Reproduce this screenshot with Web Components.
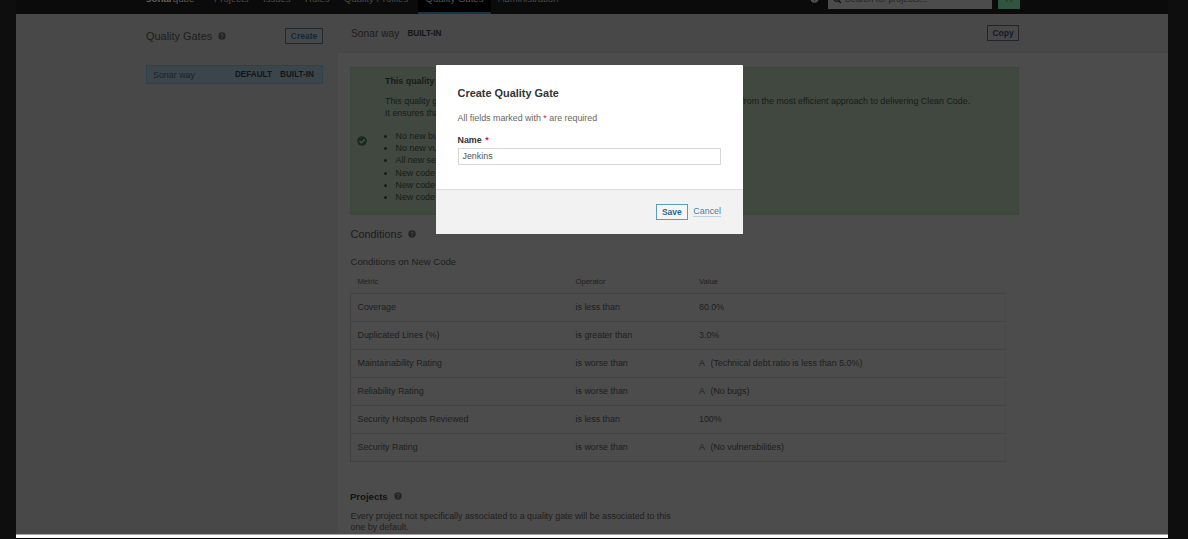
<!DOCTYPE html>
<html lang="en"><head><meta charset="utf-8"><title>Quality Gates</title>
<style>
html,body{margin:0;height:539px;overflow:hidden;background:#0e0e0e}
body{font-family:"Liberation Sans",Arial,sans-serif;font-size:8.88px;color:#1e1e1e}
</style></head><body><gate-app></gate-app>
<script>
const define=(name,html)=>customElements.define(name,class extends HTMLElement{
  constructor(){super();const t=document.createElement('template');
    t.innerHTML='<style>*{box-sizing:border-box}:host{display:block;box-sizing:border-box}</style>'+html;
    this.attachShadow({mode:'open'}).append(t.content.cloneNode(true));}
});
define('help-icon',`<style>:host{width:8px;height:8px;flex:none}svg{display:block}</style>
<svg width="8" height="8" viewBox="0 0 16 16"><circle cx="8" cy="8" r="7.4" fill="#252525"/><path d="M5.7 6.2C5.8 3.5 10.5 3.6 10.4 6.2C10.3 7.8 8 7.8 8 9.5M8 11v2" fill="none" stroke="#484848" stroke-width="1.9"/></svg>`);
define('ui-button',`<style>:host{border:1px solid var(--bd,#222a30);color:var(--fg,#10283b);font-weight:bold;font-size:8.5px;text-align:center;line-height:14px;height:16px;background:var(--bg,transparent)}</style><slot></slot>`);
define('ui-badge',`<style>:host{font-weight:bold;font-size:8.2px;color:#151517;white-space:nowrap}</style><slot></slot>`);
define('nav-bar',`<style>
:host{height:14px;background:#0b0b0b;overflow:hidden;position:relative}
.row{display:flex;margin-top:-7px;height:21px;line-height:12px;font-size:9.56px;color:#4a4a4a;white-space:nowrap;padding-left:130px}
.row>*{flex:none}.logo{width:68px;font-size:9.8px;color:#555}.logo b{color:#626262}
.active{width:73px;margin-left:4px;background:#000;border-bottom:2px solid #163446;text-align:center;color:#555}
.search{width:164px;height:16px;background:#4c4c4c;color:#252525;padding-left:17px;margin-left:9px;position:relative;font-size:8.88px}
.search svg{position:absolute;left:5px;top:2px}
.av{width:22px;height:16px;margin-left:6px;background:#315440;color:#142c1d;text-align:center}
</style><div class="row"><span class="logo"><b>sonar</b>qube</span><span style="width:49px">Projects</span><span style="width:42px">Issues</span><span style="width:39px">Rules</span><span style="width:70px">Quality Profiles</span><span class="active">Quality Gates</span><span style="margin-left:7px;width:312px">Administration</span>
<svg width="9" height="9" viewBox="0 0 10 10" style="margin-top:1px"><circle cx="5" cy="5" r="4.8" fill="#515151"/><path d="M3.5 3.6C3.5 1.8 6.7 1.8 6.5 3.7C6.4 4.9 5 4.7 5 6.2M5 7v1" fill="none" stroke="#0b0b0b"/></svg>
<span class="search"><svg width="9" height="9" viewBox="0 0 9 9" fill="none" stroke="#171717" stroke-width="1.3"><circle cx="3.7" cy="3.7" r="2.7"/><path d="M5.7 5.7L8 8"/></svg>Search for projects...</span><span class="av">A</span></div>`);
define('gate-sidebar',`<style>
:host{width:322px;padding:14px 15px 0 130px;background:#484848}
.top{display:flex;align-items:center;height:16px;font-size:10.93px;color:#1d1d1d}
help-icon{margin:0 auto 0 6px}ui-button{width:38px}
.item{margin-top:21px;height:19px;background:#3b464c;border:1px solid #2c434f;display:flex;align-items:center;padding:0 8px 0 6px;color:#17242c}
.item span{margin-right:auto}.item ui-badge+ui-badge{margin-left:8px}
</style><div class="top">Quality Gates<help-icon></help-icon><ui-button>Create</ui-button></div>
<div class="item"><span>Sonar way</span><ui-badge>DEFAULT</ui-badge><ui-badge>BUILT-IN</ui-badge></div>`);
define('gate-notice',`<style>
:host{width:669px;height:148px;background:#40483f;border:1px solid #3c463c;display:flex;color:#171c17;line-height:12.2px}
.ic{width:34px;padding:68px 0 0 6px;flex:none}svg{display:block}
.tx{white-space:nowrap}b{display:block;margin-top:7px;height:20px}p{margin:0}.w{word-spacing:.85px}
ul{margin:10.5px 0 0;padding-left:10.5px}
</style><div class="ic"><svg width="10" height="10" viewBox="0 0 10 10"><circle cx="5" cy="5" r="4.8" fill="#192b1d"/><path d="M2.5 4.9L4.4 6.8L7.6 3.4" fill="none" stroke="#465145" stroke-width="1.4"/></svg></div>
<div class="tx"><b>This quality gate complies with Clean as You Code</b>
<p>This quality gate <span class="w">complies with the Clean as You Code methodology, so that you benefit </span>from the most efficient approach to delivering Clean Code.</p><p>It ensures that:</p>
<ul><li>No new bugs are introduced</li><li>No new vulnerabilities are introduced</li><li>All new security hotspots are reviewed</li><li>New code has limited technical debt</li><li>New code has limited duplication</li><li>New code is covered by tests</li></ul></div>`);
define('condition-row',`<style>
:host{display:grid;grid-template-columns:218px 123.5px 1fr;height:28px;align-items:center;padding:0 0 2px 6.5px;border-bottom:1px solid #434343;border-left:1px solid #404040;border-right:1px solid #484848}
</style><slot name="m"></slot><slot name="o"></slot><slot name="v"></slot>`);
define('condition-table',`<style>
:host{width:656px}
.head{display:grid;grid-template-columns:218px 123.5px 1fr;padding-left:7.5px;font-size:7.6px;height:22px;line-height:20px;border-bottom:1px solid #434343}
i{font-style:normal;margin-left:5.5px}
</style><div class="head"><span>Metric</span><span>Operator</span><span>Value</span></div>`+
[['Coverage','is less than','80.0%'],['Duplicated Lines (%)','is greater than','3.0%'],['Maintainability Rating','is worse than','A<i>(Technical debt ratio is less than 5.0%)</i>'],['Reliability Rating','is worse than','A<i>(No bugs)</i>'],['Security Hotspots Reviewed','is less than','100%'],['Security Rating','is worse than','A<i>(No vulnerabilities)</i>']]
.map(r=>`<condition-row><span slot="m">${r[0]}</span><span slot="o">${r[1]}</span><span slot="v">${r[2]}</span></condition-row>`).join(''));
define('gate-details',`<style>
:host{flex:1;background:#4c4c4c}
.head{height:39px;background:#484848;padding:0 149px 0 13px;display:flex;align-items:center;font-size:10.25px;color:#1d1d1d;border-bottom:1px solid #464646}
.head ui-badge{margin:0 auto 0 8px}.head ui-button{width:32px}
.body{padding:14px 0 0 12px}
.h{display:flex;align-items:center;height:14px;font-size:10.93px;color:#1c1c1c}.h help-icon{margin-left:6px}
.sub{font-size:9.56px;line-height:12px;margin-top:15px;height:16px;padding-left:.5px}
.p{font-weight:bold;font-size:9.56px;margin-top:27px;color:#121212}
p{margin:8px 0 0;line-height:11px;white-space:nowrap;padding-left:.5px}
</style><div class="head"><span>Sonar way</span><ui-badge>BUILT-IN</ui-badge><ui-button style="--bd:#24242c;--fg:#15192a">Copy</ui-button></div>
<div class="body"><gate-notice></gate-notice>
<div class="h" style="margin-top:12px;padding-left:.5px">Conditions<help-icon></help-icon></div>
<div class="sub">Conditions on New Code</div><condition-table></condition-table>
<div class="h p">Projects<help-icon></help-icon></div>
<p>Every project not specifically associated to a quality gate will be associated to this<br>one by default.</p></div>`);
define('gate-modal',`<style>
:host{position:absolute;left:436px;top:65px;width:307px;height:169px;background:#fff;border-radius:1px;overflow:hidden;color:#666}
.b{height:124px;padding:21px 22px 0 21.5px}
h2{margin:0;font-size:10.93px;line-height:14px;color:#333}
em{font-style:normal;color:#c4282f}
.r{margin-top:12px;line-height:12px}
.l{margin-top:10px;line-height:12px;font-weight:bold;color:#333}
.in{margin-top:2px;height:17px;border:1px solid #d8d8d8;line-height:15px;padding-left:4px;color:#555}
.f{height:45px;background:#f2f2f2;border-top:1px solid #ddd;display:flex;padding:14px 22px 0 0;justify-content:flex-end}
ui-button{width:32px;--bd:#5a9cc4;--fg:#236a97;--bg:#f8f6f3}
a{margin-left:5.5px;height:13px;line-height:15px;color:#4b82a8;border-bottom:1px solid #c0d2e0}
</style><div class="b"><h2>Create Quality Gate</h2><div class="r">All fields marked with <em>*</em> are required</div><div class="l">Name <em style="margin-left:1px">*</em></div><div class="in">Jenkins</div></div>
<div class="f"><ui-button>Save</ui-button><a>Cancel</a></div>`);
define('gate-app',`<style>
:host{width:1152px;height:539px;margin-left:16px;border-bottom:1px solid #000}
main{display:flex;height:520px;overflow:hidden}
.strip{height:4px;background:#fff;border-top:1px solid #a8a3a6}
</style><nav-bar></nav-bar><main><gate-sidebar></gate-sidebar><gate-details></gate-details></main><div class="strip"></div><gate-modal></gate-modal>`);
</script></body></html>
